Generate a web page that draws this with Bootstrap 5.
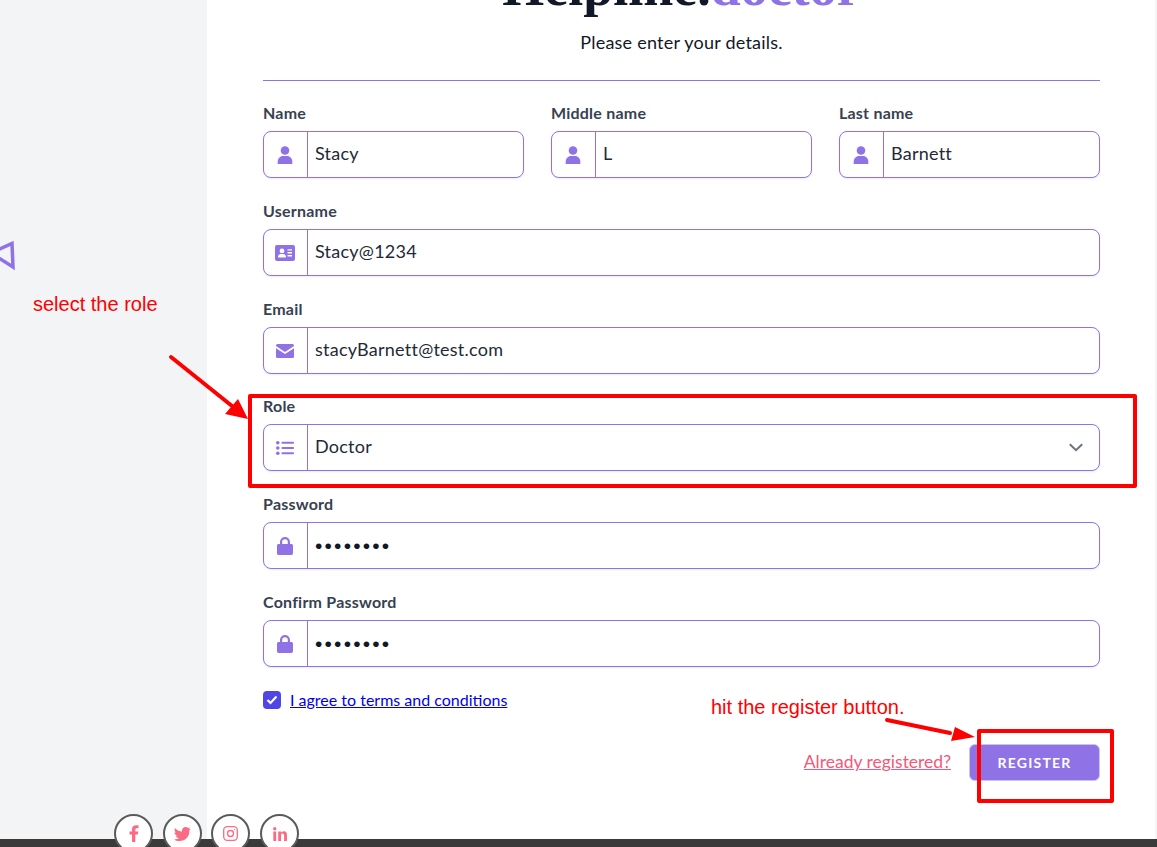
<!DOCTYPE html>
<html lang="en"><head><meta charset="utf-8">
<title>Register</title>
<link href="https://cdn.jsdelivr.net/npm/bootstrap@5.3.0/dist/css/bootstrap.min.css" rel="stylesheet">
<style>
html,body{height:847px;overflow:hidden;background:#fff;font-family:"Lato","Noto Sans",sans-serif;}
.stage{position:relative;height:847px;width:1157px;overflow:hidden;}
.side-panel{width:207px;height:839px;flex:none;background:#f3f4f6;}
.form-area{padding:0 57px 0 56px;flex:1;height:839px;overflow:hidden;}
.brand-title{font-family:"Liberation Serif",serif;font-weight:700;font-size:54px;line-height:48px;margin:-37px 0 0;color:#111827;text-align:center;height:48px;}
.brand-title span{color:#8f72e6;}
.sub-line{text-align:center;font-size:18px;letter-spacing:.23px;line-height:24px;color:#111827;margin:19px 0 26px;}
.rule-line{border-top:1px solid #8f72e6;margin:0 0 23px;opacity:1;}
.fld-label{display:block;font-weight:700;font-size:16px;letter-spacing:.22px;line-height:18px;color:#374151;margin-bottom:9px;}
.fld-group{display:flex;height:47px;border:1px solid #8f72e6;border-radius:8px;box-shadow:0 1px 2px rgba(0,0,0,.08);background:#fff;}
.fld-icon{width:44px;flex:none;border-right:1px solid #8f72e6;display:flex;align-items:center;justify-content:center;padding-right:1px;}
.fld-icon svg{fill:#8f72e6;display:block;}
.fld-val{flex:1;padding:0 7px 2px;display:flex;align-items:center;font-size:18px;letter-spacing:.24px;color:#1f2937;}
.fld-dots{font-size:21px;letter-spacing:2.200px;color:#111827;font-family:"Liberation Sans",sans-serif;padding-bottom:0;}
.fld-block{margin-bottom:24px;}
.fld-tight{margin-bottom:23px;}
.tri-row{display:grid;grid-template-columns:repeat(3,261px);column-gap:27px;}
.agree-row{margin-top:23px;height:20px;gap:9px;}
.agree-box{width:18px;height:18px;background:#4f46e5;border-radius:4px;display:flex;align-items:center;justify-content:center;flex:none;}
.agree-link{color:#0000ee;font-size:16px;text-decoration:underline;}
.action-row{margin-top:34px;gap:18px;}
.reg-link{color:#f4587a;font-size:17.500px;text-decoration:underline;}
.reg-btn{width:131px;height:37px;background:#8f72e6;border:1px solid #c9c5e8;border-radius:6px;color:#fff;font-weight:700;font-size:14px;letter-spacing:1.2px;padding:0;}
.reg-btn:hover{background:#8f72e6;color:#fff;}
.foot-bar{position:absolute;left:0;right:0;top:839px;height:8px;background:#3a3a3a;}
.social-dot{position:absolute;top:814px;width:39px;height:39px;border-radius:50%;background:#fff;border:2px solid #5a5a5a;display:flex;align-items:center;justify-content:center;}
.social-dot svg{display:block;}
.mark-box{position:absolute;border:4px solid #f00;border-radius:2px;}
.note-text{position:absolute;color:#f00;font-family:"Liberation Sans",sans-serif;font-size:20px;line-height:24px;white-space:nowrap;}
.over-svg{position:absolute;left:0;top:0;}
.right-strip{position:absolute;left:1155px;top:0;width:2px;height:839px;background:#f5f5f5;}
</style></head>
<body>
<div class="stage">
<div class="d-flex">
  <div class="side-panel"></div>
  <div class="form-area">
    <h1 class="brand-title">Helpline.<span>doctor</span></h1>
    <p class="sub-line">Please enter your details.</p>
    <hr class="rule-line">
    <div class="tri-row fld-block">
      <div><label class="fld-label">Name</label><div class="fld-group"><span class="fld-icon"><svg width="16" height="18" viewBox="0 0 16 18"><circle cx="8" cy="4.5" r="4.3"/><path d="M.7 18v-2.2C.7 12.5 3 10 6 10h4c3 0 5.300 2.500 5.300 5.800V18z"/></svg></span><span class="fld-val">Stacy</span></div></div>
      <div><label class="fld-label">Middle name</label><div class="fld-group"><span class="fld-icon"><svg width="16" height="18" viewBox="0 0 16 18"><circle cx="8" cy="4.5" r="4.3"/><path d="M.7 18v-2.2C.7 12.5 3 10 6 10h4c3 0 5.300 2.500 5.300 5.800V18z"/></svg></span><span class="fld-val">L</span></div></div>
      <div><label class="fld-label">Last name</label><div class="fld-group"><span class="fld-icon"><svg width="16" height="18" viewBox="0 0 16 18"><circle cx="8" cy="4.5" r="4.3"/><path d="M.7 18v-2.2C.7 12.5 3 10 6 10h4c3 0 5.300 2.500 5.300 5.800V18z"/></svg></span><span class="fld-val">Barnett</span></div></div>
    </div>
    <div class="fld-block"><label class="fld-label">Username</label><div class="fld-group"><span class="fld-icon"><svg width="20" height="16" viewBox="0 0 20 16"><path fill-rule="evenodd" d="M2 0h16a2 2 0 0 1 2 2v12a2 2 0 0 1-2 2H2a2 2 0 0 1-2-2V2a2 2 0 0 1 2-2zm5 3.500a2.400 2.400 0 1 0 0 4.800A2.400 2.400 0 0 0 7 3.500zM3.500 12.500h7c.3 0 .5-.2.500-.5C11 10.300 9.700 9 8.300 9H5.700C4.300 9 3 10.300 3 12c0 .3.200.5.500.5zM12.500 4.200v1.400h4.500V4.200zm0 2.900v1.400h4.500V7.100zm0 2.900v1.400h4.500V10z"/></svg></span><span class="fld-val">Stacy@1234</span></div></div>
    <div class="fld-tight"><label class="fld-label">Email</label><div class="fld-group"><span class="fld-icon"><svg width="18" height="14" viewBox="0 0 18 14"><path d="M1.500 0h15A1.500 1.500 0 0 1 18 1.500v.6L9 8 0 2.100v-.6A1.500 1.500 0 0 1 1.500 0z"/><path d="M0 4.200 9 10l9-5.800v8.300a1.500 1.500 0 0 1-1.500 1.500h-15A1.500 1.500 0 0 1 0 12.500z"/></svg></span><span class="fld-val">stacyBarnett@test.com</span></div></div>
    <div class="fld-block"><label class="fld-label">Role</label><div class="fld-group"><span class="fld-icon"><svg width="18" height="14" viewBox="0 0 18 14"><circle cx="1.800" cy="1.800" r="1.800"/><circle cx="1.800" cy="7" r="1.800"/><circle cx="1.800" cy="12.200" r="1.800"/><rect x="5.500" y=".8" width="12.500" height="2" rx=".8"/><rect x="5.500" y="6" width="12.500" height="2" rx=".8"/><rect x="5.500" y="11.200" width="12.500" height="2" rx=".8"/></svg></span><span class="fld-val">Doctor<svg class="ms-auto me-2" width="16" height="16" viewBox="0 0 16 16"><path d="M1.800 5.200 8 11.200l6.200-6" fill="none" stroke="#6b7280" stroke-width="2"/></svg></span></div></div>
    <div class="fld-block"><label class="fld-label">Password</label><div class="fld-group"><span class="fld-icon"><svg width="16" height="18" viewBox="0 0 16 18"><path fill-rule="evenodd" d="M8 0a5 5 0 0 1 5 5v2h1.300C15.300 7 16 7.700 16 8.700v7.600c0 1-.7 1.700-1.700 1.700H1.700C.7 18 0 17.300 0 16.300V8.700C0 7.700.7 7 1.700 7H3V5a5 5 0 0 1 5-5zm0 2.200A2.800 2.800 0 0 0 5.200 5v2h5.600V5A2.800 2.800 0 0 0 8 2.200z"/></svg></span><span class="fld-val fld-dots">••••••••</span></div></div>
    <div><label class="fld-label">Confirm Password</label><div class="fld-group"><span class="fld-icon"><svg width="16" height="18" viewBox="0 0 16 18"><path fill-rule="evenodd" d="M8 0a5 5 0 0 1 5 5v2h1.300C15.300 7 16 7.700 16 8.700v7.600c0 1-.7 1.700-1.700 1.700H1.700C.7 18 0 17.300 0 16.300V8.700C0 7.700.7 7 1.700 7H3V5a5 5 0 0 1 5-5zm0 2.200A2.800 2.800 0 0 0 5.200 5v2h5.600V5A2.800 2.800 0 0 0 8 2.200z"/></svg></span><span class="fld-val fld-dots">••••••••</span></div></div>
    <div class="d-flex align-items-center agree-row"><span class="agree-box"><svg width="12" height="10" viewBox="0 0 12 10"><path d="M1.500 5 4.500 8 10.500 1.500" fill="none" stroke="#fff" stroke-width="2.200"/></svg></span><a class="agree-link" href="#">I agree to terms and conditions</a></div>
    <div class="d-flex align-items-center justify-content-end action-row"><a class="reg-link" href="#">Already registered?</a><button class="btn reg-btn" type="button">REGISTER</button></div>
  </div>
</div>
<div class="right-strip"></div>
<div class="foot-bar"></div>
<span class="social-dot" style="left:114px"><svg width="10" height="17" viewBox="0 0 10 17"><path fill="#fb6b84" d="M3 17V9.500H.5V6.500H3V4.500C3 1.700 4.700.3 7 .3c1 0 2 .1 2.500.2v2.700H8c-1.300 0-1.700.7-1.700 1.600v1.700h3L8.800 9.500H6.300V17z"/></svg></span>
<span class="social-dot" style="left:163px"><svg width="17" height="14" viewBox="0 0 17 14"><path fill="#fb6b84" d="M15.300 3.500c.6 5.500-3.600 10.500-9.900 10.500C3.400 14 1.500 13.400 0 12.400c1.800.2 3.600-.3 5-1.400-1.500 0-2.700-1-3.200-2.300.5.100 1 .1 1.500-.1C1.700 8.300.5 6.900.5 5.200c.5.300 1 .4 1.600.4C.6 4.600.1 2.600 1 1c1.700 2.100 4.200 3.400 7.100 3.500C7.600 2.300 9.300 0 11.600 0c1 0 1.900.4 2.500 1.100.8-.2 1.500-.4 2.100-.8-.2.800-.8 1.400-1.500 1.900.7-.1 1.300-.3 1.900-.5-.4.700-1 1.300-1.300 1.800z"/></svg></span>
<span class="social-dot" style="left:211px"><svg width="15" height="15" viewBox="0 0 15 15" fill="none" stroke="#fb6b84"><rect x=".7" y=".7" width="13.600" height="13.600" rx="3.500" stroke-width="1.300"/><circle cx="7.500" cy="7.500" r="3" stroke-width="1.300"/><circle cx="11.300" cy="3.700" r=".6" fill="#fb6b84" stroke="none"/></svg></span>
<span class="social-dot" style="left:260px"><svg width="14" height="14" viewBox="0 0 14 14"><path fill="#fb6b84" d="M.3 4.500h2.900V14H.3zM1.750 0a1.700 1.700 0 1 1 0 3.400 1.700 1.700 0 0 1 0-3.400zM5.200 4.500H8v1.300c.5-.8 1.500-1.600 3-1.600 2.400 0 3 1.700 3 4V14h-2.900V8.800c0-1.200-.2-2.200-1.500-2.200S8.100 7.500 8.100 8.800V14H5.200z"/></svg></span>
<svg class="over-svg" width="60" height="300" viewBox="0 0 60 300"><path d="M12 243.500 13 267-9 253z" fill="none" stroke="#8f72e6" stroke-width="3.500"/></svg>
<span class="note-text" style="left:33px;top:292px">select the role</span>
<span class="note-text" style="left:711px;top:695px">hit the register button.</span>
<span class="mark-box" style="left:248px;top:394px;width:889px;height:94px"></span>
<span class="mark-box" style="left:977px;top:729px;width:137px;height:74px"></span>
<svg class="over-svg" width="1157" height="847" viewBox="0 0 1157 847"><path d="M171 357 232 406" stroke="#f00" stroke-width="4" stroke-linecap="round"/><path d="M248 419 225 414 238 399z" fill="#f00"/><path d="M887 720 950 733" stroke="#f00" stroke-width="4" stroke-linecap="round"/><path d="M975 737 951 741 955 727z" fill="#f00"/></svg>
</div>
<script src="https://cdn.jsdelivr.net/npm/bootstrap@5.3.0/dist/js/bootstrap.bundle.min.js"></script>
</body></html>
